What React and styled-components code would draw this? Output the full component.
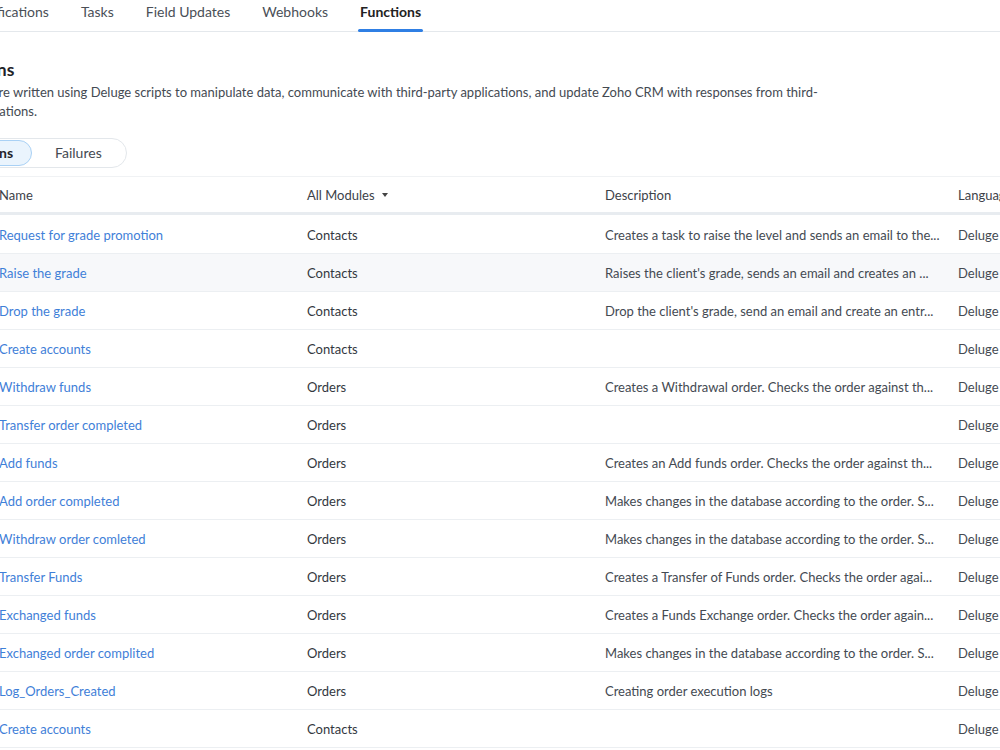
import React from "react";
import styled, { createGlobalStyle } from "styled-components";

const GlobalStyle = createGlobalStyle`
  html, body {
    margin: 0;
    padding: 0;
    background: #fff;
    overflow: hidden;
  }
  body {
    font-family: Lato, "Noto Sans", "Liberation Sans", sans-serif;
    color: #333;
  }
`;

const Page = styled.div`
  width: 1200px;
  margin-left: -70px;
`;

const TabBar = styled.div`
  display: flex;
  gap: 32px;
  height: 31px;
  padding-left: 40px;
  border-bottom: 1px solid #e4e8ec;
`;

const Tab = styled.div`
  position: relative;
  padding-top: 2px;
  line-height: 20px;
  font-size: 14px;
  color: ${(p) => (p.active ? "#222" : "#4a4f57")};
  font-weight: ${(p) => (p.active ? 700 : 400)};

  &::after {
    content: "";
    display: ${(p) => (p.active ? "block" : "none")};
    position: absolute;
    left: -2px;
    right: -2px;
    bottom: -1px;
    height: 3px;
    border-radius: 2px;
    background: #2f7fe4;
  }
`;

const Section = styled.div`
  padding-top: 26px;
`;

const Title = styled.h2`
  margin: 0 0 1px 8px;
  font-size: 17.5px;
  line-height: 24px;
  font-weight: 700;
  color: #1f2329;
`;

const Intro = styled.p`
  margin: 0 0 17px 3px;
  max-width: 900px;
  font-size: 13px;
  line-height: 19px;
  color: #444a52;
`;

const Toggle = styled.div`
  display: inline-flex;
  align-items: center;
  height: 28px;
  padding: 0 2px;
  border: 1px solid #e3e7eb;
  border-radius: 16px;
  background: #fff;
`;

const ToggleItem = styled.div`
  height: 24px;
  line-height: 24px;
  padding: 0 ${(p) => (p.active ? 18 : 21)}px;
  border-radius: 13px;
  font-size: 14px;
  color: ${(p) => (p.active ? "#1f2329" : "#444a52")};
  font-weight: ${(p) => (p.active ? 700 : 400)};
  background: ${(p) => (p.active ? "#eaf4fd" : "transparent")};
  border: 1px solid ${(p) => (p.active ? "#a9d1f5" : "transparent")};
  margin-right: ${(p) => (p.active ? 1 : 0)}px;
`;

const Table = styled.div`
  margin-top: 8px;
`;

const Row = styled.div`
  display: grid;
  grid-template-columns: 69px 308px 298px 353px 1fr;
  align-items: center;
  height: ${(p) => (p.head ? 35 : 37)}px;
  font-size: 13px;
  white-space: nowrap;
  background: ${(p) => (p.hover ? "#f7f8fa" : "#fff")};
  border-top: ${(p) => (p.head ? "1px solid #f0f2f4" : "none")};
  border-bottom: ${(p) => (p.head ? "3px solid #e8ecf0" : "1px solid #eceff2")};

  &:first-child {
    margin-bottom: 1px;
  }
`;

const Cell = styled.div`
  overflow: hidden;
  padding-right: 14px;
  color: ${(p) => (p.muted ? "#444a52" : "#333840")};
`;

const NameLink = styled.a`
  color: #3f80d8;
  text-decoration: none;
`;

const HeadCell = styled.div`
  display: flex;
  align-items: center;
  gap: 7px;
  color: #3d4249;
  font-size: 13px;
`;

const Caret = styled.span`
  width: 0;
  height: 0;
  border-left: 3.5px solid transparent;
  border-right: 3.5px solid transparent;
  border-top: 4px solid #444;
`;

const rows = [
  ["Request for grade promotion", "Contacts", "Creates a task to raise the level and sends an email to the..."],
  ["Raise the grade", "Contacts", "Raises the client's grade, sends an email and creates an ..."],
  ["Drop the grade", "Contacts", "Drop the client's grade, send an email and create an entr..."],
  ["Create accounts", "Contacts", ""],
  ["Withdraw funds", "Orders", "Creates a Withdrawal order. Checks the order against th..."],
  ["Transfer order completed", "Orders", ""],
  ["Add funds", "Orders", "Creates an Add funds order. Checks the order against th..."],
  ["Add order completed", "Orders", "Makes changes in the database according to the order. S..."],
  ["Withdraw order comleted", "Orders", "Makes changes in the database according to the order. S..."],
  ["Transfer Funds", "Orders", "Creates a Transfer of Funds order. Checks the order agai..."],
  ["Exchanged funds", "Orders", "Creates a Funds Exchange order. Checks the order again..."],
  ["Exchanged order complited", "Orders", "Makes changes in the database according to the order. S..."],
  ["Log_Orders_Created", "Orders", "Creating order execution logs"],
  ["Create accounts", "Contacts", ""],
];

const tabs = ["Email Notifications", "Tasks", "Field Updates", "Webhooks", "Functions"];

const App = () => {
  return (
    <>
      <GlobalStyle />
      <Page>
        <TabBar>
          {tabs.map((t) => (
            <Tab key={t} active={t === "Functions"}>
              {t === "Email Notifications" ? "Notifications" : t}
            </Tab>
          ))}
        </TabBar>
        <Section>
          <Title>Functions</Title>
          <Intro>
            Functions are written using Deluge scripts to manipulate data, communicate with
            third-party applications, and update Zoho CRM with responses from third-party
            applications.
          </Intro>
          <Toggle>
            <ToggleItem active>Functions</ToggleItem>
            <ToggleItem>Failures</ToggleItem>
          </Toggle>
          <Table>
            <Row head>
              <div />
              <HeadCell>Name</HeadCell>
              <HeadCell>
                All Modules <Caret />
              </HeadCell>
              <HeadCell>Description</HeadCell>
              <HeadCell>Language</HeadCell>
            </Row>
            {rows.map(([name, module, desc], i) => (
              <Row key={i} hover={i === 1}>
                <div />
                <Cell>
                  <NameLink href="#">{name}</NameLink>
                </Cell>
                <Cell>{module}</Cell>
                <Cell muted>{desc}</Cell>
                <Cell muted>Deluge</Cell>
              </Row>
            ))}
          </Table>
        </Section>
      </Page>
    </>
  );
};

export default App;
